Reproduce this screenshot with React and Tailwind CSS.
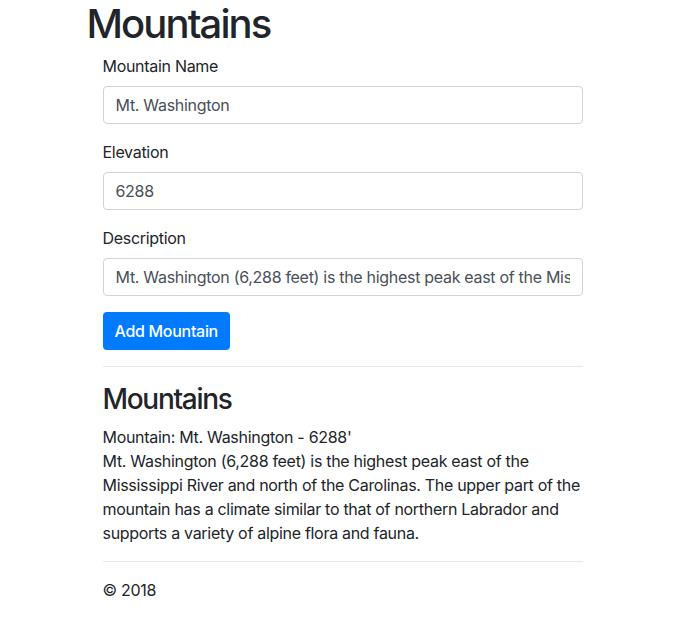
import { useState } from 'react';

const Field = ({ label, value, onChange }) => (
  <div className="mb-4">
    <label className="block mb-2 text-base leading-6">{label}</label>
    <input
      type="text"
      value={value}
      onChange={onChange}
      className="block w-full h-[38px] px-3 text-base tracking-[-0.3px] text-[#495057] bg-white border border-[#ced4da] rounded outline-none"
    />
  </div>
);

export default function App() {
  const [name, setName] = useState('Mt. Washington');
  const [elevation, setElevation] = useState('6288');
  const [description, setDescription] = useState(
    'Mt. Washington (6,288 feet) is the highest peak east of the Mississippi River and north of the Carolinas. The upper part of the mountain has a climate similar to that of northern Labrador and supports a variety of alpine flora and fauna.'
  );

  return (
    <div className="min-h-screen bg-white text-[#212529] tracking-[-0.3px] font-['Inter',sans-serif]">
      <div className="w-[510px] mx-auto">
        <h1 className="text-[40px] leading-[48px] font-medium tracking-[-1.9px] mb-[6px]">Mountains</h1>
        <div className="ml-4 w-[480px]">
          <form onSubmit={(e) => e.preventDefault()}>
            <Field label="Mountain Name" value={name} onChange={(e) => setName(e.target.value)} />
            <Field label="Elevation" value={elevation} onChange={(e) => setElevation(e.target.value)} />
            <Field label="Description" value={description} onChange={(e) => setDescription(e.target.value)} />
            <button
              type="submit"
              className="h-[38px] px-3 text-base font-medium tracking-[-0.3px] text-white bg-[#007bff] rounded"
            >
              Add Mountain
            </button>
          </form>
          <hr className="my-4 border-0 border-t border-black/10" />
          <h3 className="text-[28px] leading-[33.6px] font-medium tracking-[-1.3px] mb-2">Mountains</h3>
          <div className="text-base leading-6">
            <div>Mountain: {name} - {elevation}'</div>
            <div>{description}</div>
          </div>
          <hr className="my-4 border-0 border-t border-black/10" />
          <footer className="text-base leading-6">© 2018</footer>
        </div>
      </div>
    </div>
  );
}
